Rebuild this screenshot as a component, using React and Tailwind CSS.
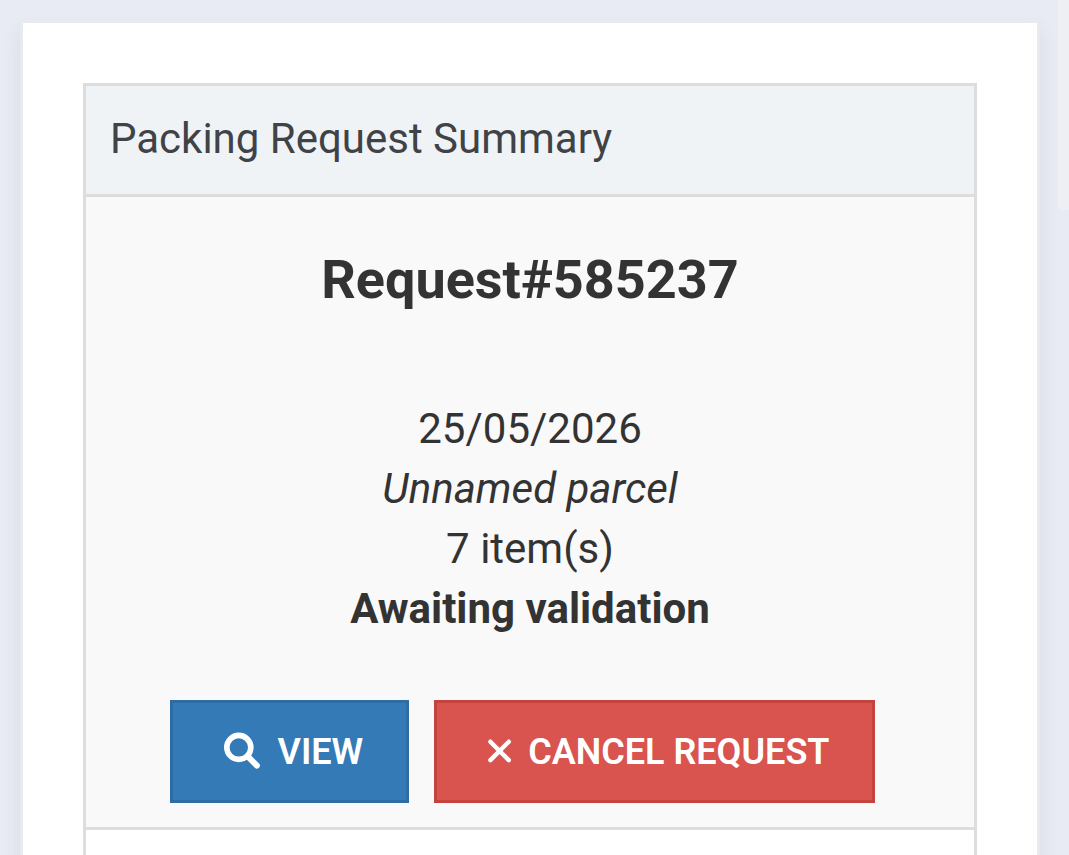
import React from "react";

const request = {
  id: 585237,
  date: "25/05/2026",
  name: "Unnamed parcel",
  items: 7,
  status: "Awaiting validation",
};

function SearchIcon() {
  return (
    <svg
      className="size-9 overflow-visible"
      viewBox="0 0 36 36"
      fill="none"
      stroke="currentColor"
      strokeLinecap="round"
      aria-hidden="true"
    >
      <circle cx="14.8" cy="13.4" r="12" strokeWidth="5.6" />
      <path d="M23.5 22.2l9.4 9.4" strokeWidth="6" />
    </svg>
  );
}

function CloseIcon() {
  return (
    <svg
      className="h-9 w-[27px]"
      viewBox="0 0 27 36"
      fill="none"
      stroke="currentColor"
      strokeWidth="4.4"
      strokeLinecap="round"
      aria-hidden="true"
    >
      <path d="M3.4 7.7l18.4 18.4M21.8 7.7L3.4 26.1" />
    </svg>
  );
}

export default function App() {
  return (
    <div className="flex h-screen overflow-hidden bg-[#e8ebf4] font-[Roboto,sans-serif] text-[#333333]">
      <main className="grow pt-5 pl-5 pr-[18px]">
        <div className="border-[3px] border-[#e7ebef] bg-white p-[60px] shadow-[0_10px_18px_rgba(69,75,75,0.09)]">
          <section className="border-[3px] border-[#dddddd]">
            <header className="border-b-[3px] border-[#dddddd] bg-[#f0f3f6] px-6 pt-[23px] pb-[25px]">
              <h2 className="text-[42px] leading-[60px] text-[#3f4347]">
                Packing Request Summary
              </h2>
            </header>

            {/* request details */}
            <div className="border-b-[3px] border-[#dddddd] bg-[#f9f9f9] px-6 pt-[53px] pb-6 text-center text-[42px] leading-[60px]">
              <h3 className="mb-[89px] text-[54px] leading-[60px] font-bold">
                Request#{request.id}
              </h3>
              <p>{request.date}</p>
              <p className="italic">{request.name}</p>
              <p>{request.items} item(s)</p>
              <p className="font-bold">{request.status}</p>

              <div className="mt-[61px] flex justify-center gap-[25px] pr-[15px]">
                <button
                  type="button"
                  className="flex h-[103px] items-center gap-[18px] border-[3px] border-[#2e6da4] bg-[#337ab7] pl-[51px] pr-[43px] text-[36px] font-semibold text-white"
                >
                  <SearchIcon />
                  VIEW
                </button>
                <button
                  type="button"
                  className="flex h-[103px] items-center gap-[14px] border-[3px] border-[#c5433f] bg-[#d9534f] pl-[50px] pr-[43px] text-[36px] font-semibold text-white"
                >
                  <CloseIcon />
                  CANCEL REQUEST
                </button>
              </div>
            </div>

            {/* next row, empty */}
            <div className="h-[108px]" />
          </section>
        </div>
      </main>

      {/* scroll track */}
      <div className="h-[210px] w-[11px] shrink-0 bg-[#eeeff5]" />
    </div>
  );
}
